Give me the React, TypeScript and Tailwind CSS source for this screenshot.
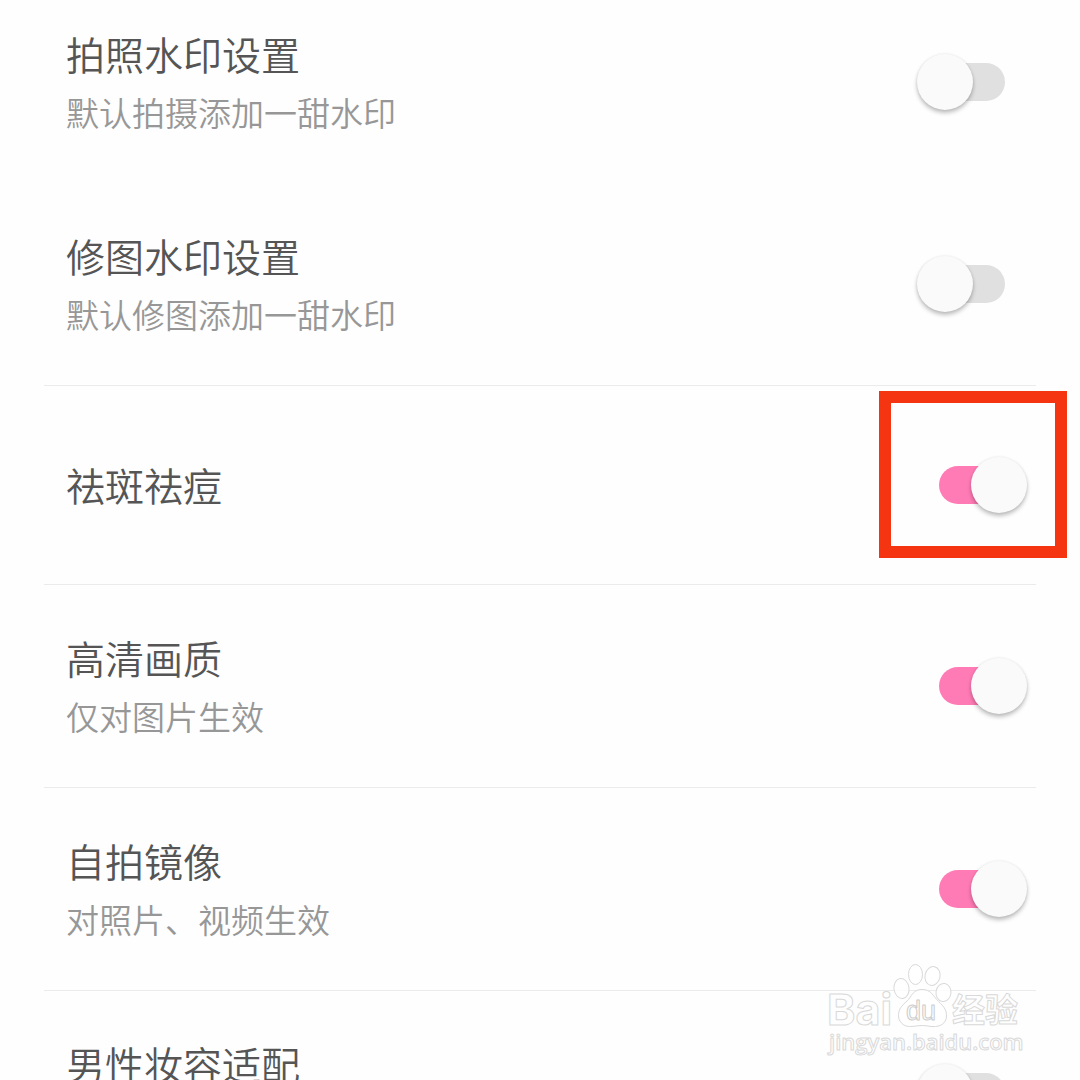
import { useState } from "react";
import clsx from "clsx";

type Setting = {
  id: string;
  title: string;
  hint?: string;
  enabled: boolean;
  divider?: boolean;
  highlighted?: boolean;
};

const SETTINGS: Setting[] = [
  { id: "camera-watermark", title: "拍照水印设置", hint: "默认拍摄添加一甜水印", enabled: false },
  {
    id: "edit-watermark",
    title: "修图水印设置",
    hint: "默认修图添加一甜水印",
    enabled: false,
    divider: true,
  },
  { id: "blemish", title: "祛斑祛痘", enabled: true, divider: true, highlighted: true },
  { id: "hd", title: "高清画质", hint: "仅对图片生效", enabled: true, divider: true },
  { id: "mirror", title: "自拍镜像", hint: "对照片、视频生效", enabled: true, divider: true },
  { id: "male-makeup", title: "男性妆容适配", hint: "", enabled: false },
];

function SettingRow({ setting }: { setting: Setting }) {
  const [checked, setChecked] = useState(setting.enabled);
  const hasHint = setting.hint !== undefined;

  return (
    <li
      className={clsx(
        "relative flex items-center justify-between pr-[31px] pl-[22px]",
        hasHint ? "py-[45px]" : "py-[71px]",
        setting.divider && "border-b border-[#ebebeb]",
      )}
    >
      <label htmlFor={setting.id} className="pb-0.5">
        <span className="block text-[39px] leading-[54px] text-[#555555]">{setting.title}</span>
        {hasHint ? (
          <span className="mt-2 block min-h-12 text-[33px] leading-[48px] text-[#979797]">
            {setting.hint}
          </span>
        ) : null}
      </label>

      <input
        id={setting.id}
        type="checkbox"
        role="switch"
        checked={checked}
        onChange={(e) => setChecked(e.target.checked)}
        className="relative h-[38px] w-[66px] shrink-0 cursor-pointer appearance-none rounded-full bg-[#e0e0e0] before:absolute before:top-[-9px] before:left-[-22px] before:size-14 before:rounded-full before:bg-[#fafafa] before:shadow-[0_3px_4px_rgba(0,0,0,0.25),0_0_3px_rgba(0,0,0,0.08)] before:content-[''] checked:bg-[#ff7bb5] checked:before:left-8"
      />

      {setting.highlighted ? (
        <div className="pointer-events-none absolute top-[5px] right-[-31px] h-[167px] w-[188px] border-12 border-[#f53411]" />
      ) : null}
    </li>
  );
}

function Watermark() {
  return (
    <svg
      viewBox="0 0 220 110"
      className="pointer-events-none absolute right-10 bottom-[15px] h-[110px] w-[220px]"
      fill="#ffffff"
      fillOpacity="0.8"
      stroke="#d9d9d9"
      strokeWidth="1"
      strokeLinejoin="round"
      aria-hidden="true"
    >
      <text x="7" y="70" fontSize="43" fontWeight="700" fontFamily="Inter, sans-serif">
        Bai
      </text>

      {/* Paw */}
      <ellipse cx="81.500" cy="33.500" rx="7.500" ry="10" transform="rotate(-8 81.500 33.500)" />
      <ellipse cx="95.500" cy="19.500" rx="7" ry="10" />
      <ellipse cx="112.500" cy="21" rx="7.500" ry="9.500" transform="rotate(12 112.500 21)" />
      <ellipse cx="123.500" cy="37.500" rx="7.500" ry="9" transform="rotate(8 123.500 37.500)" />
      <path d="M102 34.500c-6 0-9 3-12 8-3 5-11 8-11.500 17-.5 7 5 12 11 12 5 0 8-1 13-1s8 1.500 13 1c7-.5 11.500-5 11-12-.5-8-7-11-11.500-17-4-5.500-7-8-13-8z" />
      <text x="86" y="65" fontSize="27" fontFamily="Liberation Sans, sans-serif" stroke="#cccccc">
        du
      </text>

      <text x="132" y="67" fontSize="33" fontWeight="700" fontFamily="Noto Sans CJK SC, sans-serif">
        经验
      </text>
      <text x="9" y="95" fontSize="22" fontWeight="600" fontFamily="Open Sans, sans-serif">
        jingyan.baidu.com
      </text>
    </svg>
  );
}

export default function App() {
  return (
    <main className="relative h-screen overflow-hidden bg-[#fefefe] font-['Noto_Sans_CJK_SC',sans-serif] font-[350]">
      <ul className="-mt-[19px] px-11">
        {SETTINGS.map((setting) => (
          <SettingRow key={setting.id} setting={setting} />
        ))}
      </ul>
      <Watermark />
    </main>
  );
}
